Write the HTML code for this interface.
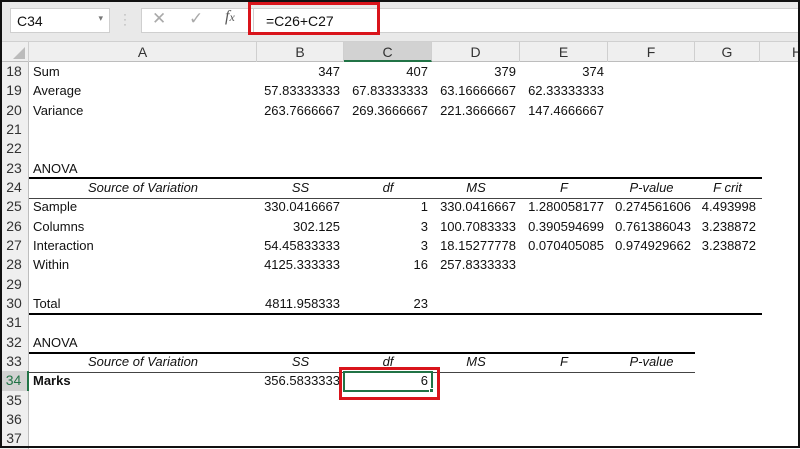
<!DOCTYPE html>
<html><head><meta charset="utf-8"><style>
*{margin:0;padding:0;box-sizing:border-box}
body{width:800px;height:448px;overflow:hidden;background:#fff;font-family:"Liberation Sans",sans-serif;font-size:13px;color:#111;position:relative}
#fb{position:absolute;left:0;top:0;width:800px;height:42px;background:#e9e9e9;border-bottom:1px solid #d0d0d0}
.box{position:absolute;background:#fff;border:1px solid #cfcfcf}
#hdr{position:absolute;left:0;top:42px;height:20px;width:800px;background:#efefef;border-bottom:1px solid #bdbdbd}
.ch{position:absolute;top:0;height:20px;line-height:20px;text-align:center;border-right:1px solid #cfcfcf;color:#333;font-size:14px}
#grid{position:absolute;left:0;top:62px;display:grid;grid-template-columns:29px 228px 87px 88px 88px 88px 87px 65px 40px;grid-auto-rows:19.33px}
#grid div{white-space:nowrap;overflow:visible;line-height:19px;padding:0 4px}
.rh{background:#efefef;border-right:1px solid #bdbdbd;text-align:center;color:#333;font-size:14px;padding:0!important}
.r{text-align:right}.c{text-align:center}.i{font-style:italic}.b{font-weight:bold}
.ln{position:absolute;background:#000}
</style></head><body>
<div id="fb">
 <div class="box" style="left:10px;top:8px;width:100px;height:25px;padding:4px 6px;font-size:14px">C34<span style="position:absolute;right:6px;top:4px;font-size:9px;color:#777">▾</span></div>
 <div style="position:absolute;left:123px;top:12px;color:#aaa;font-size:12px;line-height:5px">·<br>·<br>·</div>
 <div class="box" style="left:141px;top:8px;width:112px;height:25px;border-right:none"></div>
 <div style="position:absolute;left:152px;top:9px;color:#aaa;font-size:17px">✕</div>
 <div style="position:absolute;left:189px;top:9px;color:#aaa;font-size:17px">✓</div>
 <div style="position:absolute;left:225px;top:8px;color:#555;font-size:16px;font-style:italic;font-family:'Liberation Serif',serif">f<span style="font-size:12px">x</span></div>
 <div class="box" style="left:253px;top:8px;width:550px;height:25px;padding:4px 12px;font-size:14px">=C26+C27</div>
 <div style="position:absolute;left:248px;top:2px;width:132px;height:33px;border:3px solid #d9141b"></div>
</div>
<div id="hdr">
 <div class="ch" style="left:0;width:29px"><span style="position:absolute;right:3px;bottom:3px;width:0;height:0;border-left:12px solid transparent;border-bottom:12px solid #bbb"></span></div>
 <div class="ch" style="left:29px;width:228px">A</div>
 <div class="ch" style="left:257px;width:87px">B</div>
 <div class="ch" style="left:344px;width:88px;background:#d2d2d2;border-bottom:2px solid #217346">C</div>
 <div class="ch" style="left:432px;width:88px">D</div>
 <div class="ch" style="left:520px;width:88px">E</div>
 <div class="ch" style="left:608px;width:87px">F</div>
 <div class="ch" style="left:695px;width:65px">G</div>
 <div class="ch" style="left:760px;width:60px;text-align:left;padding-left:32px">H</div>
</div>
<div id="grid">
<div class="rh">18</div><div>Sum</div><div class="r">347</div><div class="r">407</div><div class="r">379</div><div class="r">374</div><div></div><div></div><div></div>
<div class="rh">19</div><div>Average</div><div class="r">57.83333333</div><div class="r">67.83333333</div><div class="r">63.16666667</div><div class="r">62.33333333</div><div></div><div></div><div></div>
<div class="rh">20</div><div>Variance</div><div class="r">263.7666667</div><div class="r">269.3666667</div><div class="r">221.3666667</div><div class="r">147.4666667</div><div></div><div></div><div></div>
<div class="rh">21</div><div></div><div></div><div></div><div></div><div></div><div></div><div></div><div></div>
<div class="rh">22</div><div></div><div></div><div></div><div></div><div></div><div></div><div></div><div></div>
<div class="rh">23</div><div>ANOVA</div><div></div><div></div><div></div><div></div><div></div><div></div><div></div>
<div class="rh">24</div><div class="c i">Source of Variation</div><div class="c i">SS</div><div class="c i">df</div><div class="c i">MS</div><div class="c i">F</div><div class="c i">P-value</div><div class="c i">F crit</div><div></div>
<div class="rh">25</div><div>Sample</div><div class="r">330.0416667</div><div class="r">1</div><div class="r">330.0416667</div><div class="r">1.280058177</div><div class="r">0.274561606</div><div class="r">4.493998</div><div></div>
<div class="rh">26</div><div>Columns</div><div class="r">302.125</div><div class="r">3</div><div class="r">100.7083333</div><div class="r">0.390594699</div><div class="r">0.761386043</div><div class="r">3.238872</div><div></div>
<div class="rh">27</div><div>Interaction</div><div class="r">54.45833333</div><div class="r">3</div><div class="r">18.15277778</div><div class="r">0.070405085</div><div class="r">0.974929662</div><div class="r">3.238872</div><div></div>
<div class="rh">28</div><div>Within</div><div class="r">4125.333333</div><div class="r">16</div><div class="r">257.8333333</div><div></div><div></div><div></div><div></div>
<div class="rh">29</div><div></div><div></div><div></div><div></div><div></div><div></div><div></div><div></div>
<div class="rh">30</div><div>Total</div><div class="r">4811.958333</div><div class="r">23</div><div></div><div></div><div></div><div></div><div></div>
<div class="rh">31</div><div></div><div></div><div></div><div></div><div></div><div></div><div></div><div></div>
<div class="rh">32</div><div>ANOVA</div><div></div><div></div><div></div><div></div><div></div><div></div><div></div>
<div class="rh">33</div><div class="c i">Source of Variation</div><div class="c i">SS</div><div class="c i">df</div><div class="c i">MS</div><div class="c i">F</div><div class="c i">P-value</div><div></div><div></div>
<div class="rh" style="background:#d2d2d2;border-right:2px solid #217346;color:#217346">34</div><div class="b">Marks</div><div class="r">356.5833333</div><div class="r">6</div><div></div><div></div><div></div><div></div><div></div>
<div class="rh">35</div><div></div><div></div><div></div><div></div><div></div><div></div><div></div><div></div>
<div class="rh">36</div><div></div><div></div><div></div><div></div><div></div><div></div><div></div><div></div>
<div class="rh">37</div><div></div><div></div><div></div><div></div><div></div><div></div><div></div><div></div>
</div>
<div class="ln" style="left:29px;top:177px;width:733px;height:2px"></div>
<div class="ln" style="left:29px;top:198px;width:733px;height:1px;background:#444"></div>
<div class="ln" style="left:29px;top:313px;width:733px;height:2px"></div>
<div class="ln" style="left:29px;top:352px;width:666px;height:2px"></div>
<div class="ln" style="left:29px;top:372px;width:666px;height:1px;background:#444"></div>
<div style="position:absolute;left:343px;top:371px;width:90px;height:21px;border:2px solid #217346"></div>
<div style="position:absolute;left:429px;top:388px;width:5px;height:5px;background:#217346;border:1px solid #fff"></div>
<div style="position:absolute;left:339px;top:367px;width:101px;height:33px;border:3px solid #d9141b"></div>
<div style="position:absolute;left:0;top:0;width:800px;height:448px;border:2px solid #111"></div>
</body></html>
